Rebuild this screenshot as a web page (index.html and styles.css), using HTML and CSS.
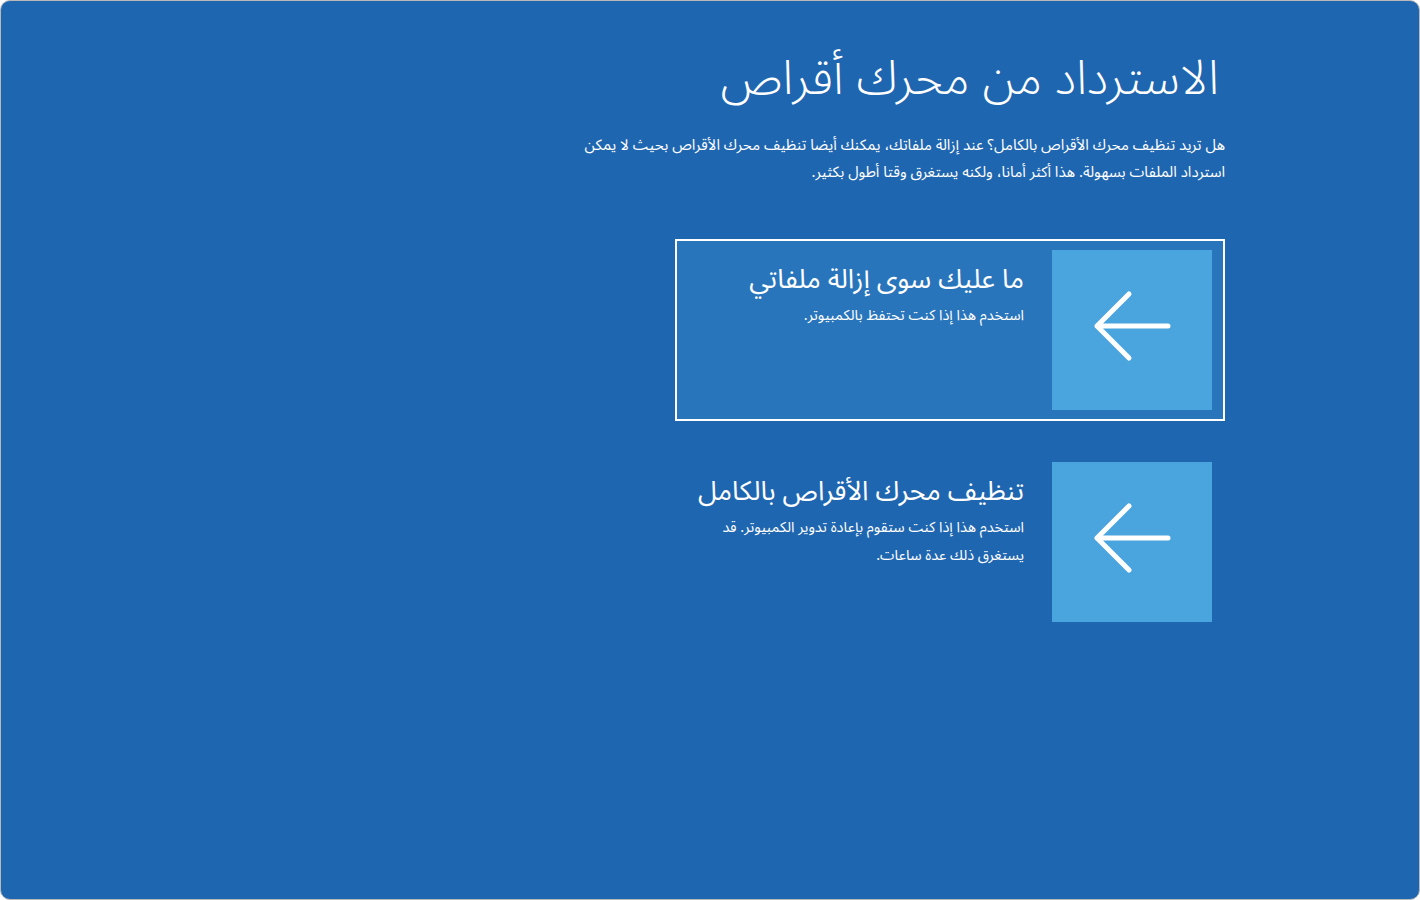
FILE: index.html
```html
<!DOCTYPE html>
<html lang="ar" dir="rtl">
<head>
<meta charset="utf-8">
<title>الاسترداد من محرك أقراص</title>
<link rel="stylesheet" href="styles.css">
</head>
<body>
<div class="screen">
  <main class="content">
    <h1 class="title">الاسترداد من محرك أقراص</h1>
    <p class="intro"><span class="line">هل تريد تنظيف محرك الأقراص بالكامل؟ عند إزالة ملفاتك، يمكنك أيضا تنظيف محرك الأقراص بحيث لا يمكن</span><span class="line">استرداد الملفات بسهولة. هذا أكثر أمانا، ولكنه يستغرق وقتا أطول بكثير.</span></p>
    <div class="options">
      <div class="option selected">
        <div class="option-icon">
          <svg width="160" height="160" viewBox="0 0 160 160"><path d="M116 76 H45 M77 44 L45 76 L77 108" fill="none" stroke="#fff" stroke-width="5" stroke-linecap="round" stroke-linejoin="round"/></svg>
        </div>
        <div class="option-text">
          <div class="option-title">ما عليك سوى إزالة ملفاتي</div>
          <div class="option-desc">استخدم هذا إذا كنت تحتفظ بالكمبيوتر.</div>
        </div>
      </div>
      <div class="option">
        <div class="option-icon">
          <svg width="160" height="160" viewBox="0 0 160 160"><path d="M116 76 H45 M77 44 L45 76 L77 108" fill="none" stroke="#fff" stroke-width="5" stroke-linecap="round" stroke-linejoin="round"/></svg>
        </div>
        <div class="option-text">
          <div class="option-title">تنظيف محرك الأقراص بالكامل</div>
          <div class="option-desc"><span class="line">استخدم هذا إذا كنت ستقوم بإعادة تدوير الكمبيوتر. قد</span><span class="line">يستغرق ذلك عدة ساعات.</span></div>
        </div>
      </div>
    </div>
  </main>
</div>
</body>
</html>
```
FILE: styles.css
```css
html, body {
  margin: 0;
  padding: 0;
  background: #ffffff;
}
body {
  font-family: "Noto Sans Arabic", "DejaVu Sans", sans-serif;
  color: #ffffff;
}
.screen {
  box-sizing: border-box;
  width: 1420px;
  height: 900px;
  border: 1px solid #b9b9b9;
  border-radius: 10px;
  background: #1f66b1;
  overflow: hidden;
  display: flex;
  justify-content: flex-start;
}
.content {
  box-sizing: border-box;
  width: 640px;
  margin-right: 194px;
  padding-top: 39px;
}
.title {
  margin: 0;
  font-size: 48px;
  font-weight: 300;
  line-height: 77px;
  padding-right: 6px;
  white-space: nowrap;
}
.intro {
  margin: 15px 0 0 0;
  font-size: 15px;
  line-height: 27px;
}
.line {
  display: block;
  white-space: nowrap;
}
.options {
  display: flex;
  flex-direction: column;
  gap: 30px;
  margin-top: 53px;
  width: 550px;
}
.option {
  display: flex;
  gap: 28px;
  padding: 9px 11px;
  border: 2px solid transparent;
}
.option.selected {
  background: #2975bc;
  border-color: #ffffff;
}
.option-icon {
  width: 160px;
  height: 160px;
  flex: none;
  background: #4aa5df;
}
.option-icon svg {
  display: block;
}
.option-text {
  flex: 1;
  padding-top: 8px;
  min-width: 0;
}
.option-title {
  font-size: 27px;
  line-height: 44px;
  white-space: nowrap;
}
.option-desc {
  font-size: 14.5px;
  line-height: 28px;
}
```
